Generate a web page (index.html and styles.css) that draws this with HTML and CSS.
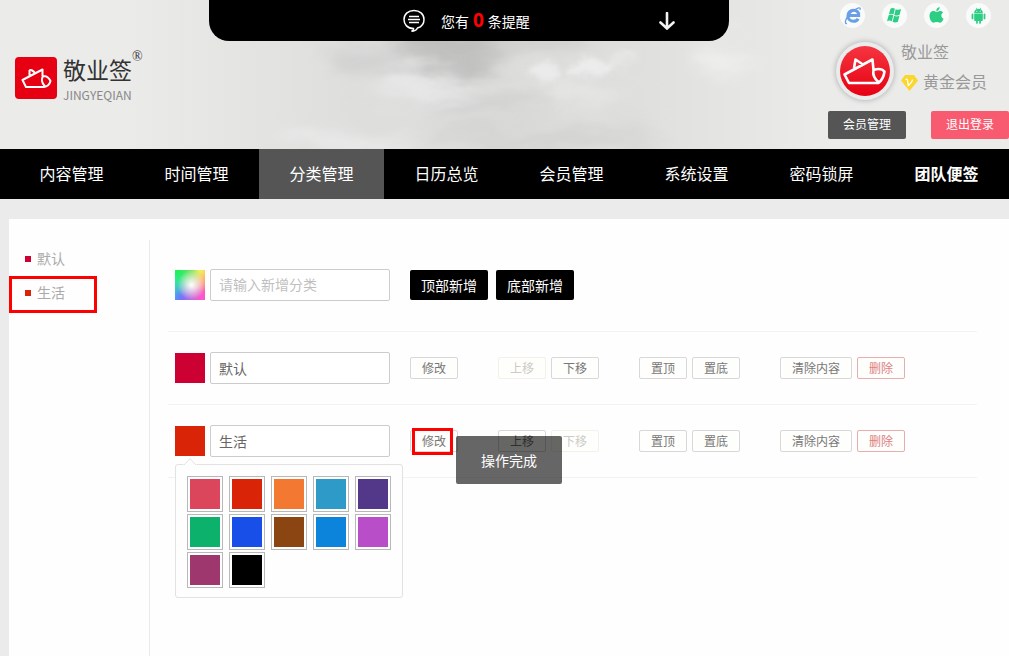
FILE: index.html
```html
<!DOCTYPE html>
<html lang="zh-CN">
<head>
<meta charset="utf-8">
<title>敬业签 - 分类管理</title>
<link rel="stylesheet" href="styles.css">
</head>
<body>
<header class="header">
  <svg class="clouds" viewBox="0 0 1009 149" preserveAspectRatio="none" aria-hidden="true">
    <defs>
      <filter id="soft" x="-50%" y="-50%" width="200%" height="200%">
        <feGaussianBlur stdDeviation="10" result="b"/>
        <feTurbulence type="fractalNoise" baseFrequency="0.012 0.030" numOctaves="4" seed="7"/>
        <feDisplacementMap in="b" scale="50" xChannelSelector="R" yChannelSelector="G"/>
      </filter>
      <filter id="puff" x="-50%" y="-50%" width="200%" height="200%">
        <feGaussianBlur stdDeviation="4" result="b"/>
        <feTurbulence type="fractalNoise" baseFrequency="0.050" numOctaves="4" seed="3"/>
        <feDisplacementMap in="b" scale="18" xChannelSelector="R" yChannelSelector="G"/>
      </filter>
      <linearGradient id="sky"><stop offset="0.120" stop-color="#ebebea"/><stop offset="0.350" stop-color="#dededd"/><stop offset="0.600" stop-color="#dddddc"/><stop offset="0.820" stop-color="#ebebea"/></linearGradient>
    </defs>
    <rect width="1009" height="149" fill="url(#sky)"/>
    <g filter="url(#soft)">
      <ellipse cx="455" cy="46" rx="60" ry="20" fill="#bebebd"/>
      <ellipse cx="530" cy="44" rx="50" ry="8" fill="#cacac9"/>
      <ellipse cx="365" cy="60" rx="35" ry="16" fill="#d2d2d1"/>
      <ellipse cx="490" cy="104" rx="60" ry="9" fill="#cececd"/>
      <ellipse cx="540" cy="140" rx="120" ry="9" fill="#d0d0cf"/>
      <ellipse cx="425" cy="86" rx="45" ry="10" fill="#ebebeb"/>
      <ellipse cx="350" cy="144" rx="70" ry="7" fill="#f0f0f0"/>
      <ellipse cx="725" cy="60" rx="25" ry="18" fill="#eeeeed"/>
      <ellipse cx="590" cy="88" rx="45" ry="12" fill="#e6e6e5"/>
    </g>
    <g filter="url(#puff)" fill="#f1f1f1">
      <ellipse cx="545" cy="72" rx="14" ry="7" opacity="0.800"/>
      <ellipse cx="593" cy="68" rx="24" ry="7" opacity="0.800"/>
      <ellipse cx="621" cy="58" rx="16" ry="5" opacity="0.500"/>
      <ellipse cx="560" cy="97" rx="12" ry="3" opacity="0.400"/>
    </g>
  </svg>
  <a class="logo" href="#" aria-label="敬业签">
    <svg class="logo-mark" viewBox="0 0 42 42"><rect width="42" height="42" rx="4" fill="#e60012"/><path d="M7.500 23 L27.500 12.500 L27.500 19 Q33 18.500 35.500 24 Q34 29.500 29 30 L11 30 Z M14.500 19 L14.500 13.500 Q16 11.500 20.500 16.500 M30 29.500 Q25 24 28 19" fill="none" stroke="#fff" stroke-width="2" stroke-linejoin="round"/></svg>
    <span class="logo-text"><span class="logo-cn">敬业签</span><span class="logo-en">JINGYEQIAN</span></span>
    <span class="logo-reg">®</span>
  </a>
  <div class="notice">
    <svg class="bubble" viewBox="0 0 22 24" fill="none" stroke="#fff" stroke-width="1.500"><path d="M10.500 19.500 C4.500 19.500 1 15.500 1 10.500 C1 5 5.500 1.500 11 1.500 C16.500 1.500 21 5 21 10.500 C21 15 18 18 14.500 19 C13.500 21 11.500 22.300 8.500 22.300 C10.500 21.500 10.800 20.500 10.500 19.500 Z"/><path d="M6 7.500h10M5 10.500h12M6 13.500h10"/></svg>
    <p class="notice-text">您有 <strong>0</strong> 条提醒</p>
    <button class="notice-toggle" aria-label="展开"><svg viewBox="0 0 16 18" fill="none" stroke="#f2f2f2" stroke-width="2.600" stroke-linecap="round"><path d="M8 1v15M1.500 10.500L8 16.500L14.500 10.500"/></svg></button>
  </div>
  <div class="user">
    <div class="platforms">
      <a href="#" aria-label="IE"><svg viewBox="0 0 25 25"><path d="M8.500 12.500h10.200c0-3.200-2-5.200-5.200-5.200c-3.300 0-5.500 2.300-5.500 5.500c0 3.300 2.300 5.500 5.500 5.500c2.200 0 3.800-.9 4.700-2.600" fill="none" stroke="#6a9fe6" stroke-width="3"/><path d="M7 20.500c-3.500.8-1-6.500 4-11s10.500-6.500 9-2.500" fill="none" stroke="#6a9fe6" stroke-width="1.300"/></svg></a>
      <a href="#" aria-label="Windows"><svg viewBox="0 0 25 25" fill="#2cce84"><path d="M8.500 5.700q2.100-1.300 4.400 0l-1.400 5.600q-2.400-1.200-4.600 0zM13.700 6.200q2.600 1.300 5.400-.2l-1.500 5.700q-2.500 1.400-5.300.2zM6.700 12.200q2.200-1.200 4.600 0l-1.500 6q-2.400-1.200-4.800.1zM12.100 12.800q2.700 1.200 5.300-.1l-1.500 6q-2.600 1.300-5.300.1z"/></svg></a>
      <a href="#" aria-label="Apple"><svg viewBox="0 0 25 25" fill="#2cce84"><path d="M12.500 8.800c1.500 0 2.300-.8 3.800-.8c1.200 0 2.200.6 2.800 1.500c-2.600 1.600-2.200 5 .5 6.200c-.8 2-2.200 4-3.700 4c-1.200 0-1.700-.7-3.200-.7s-2 .7-3.200.7c-2 0-4-3.500-4-6.900c0-3 1.800-4.800 3.900-4.800c1.300 0 2.200.8 3.100.8zM12.300 8c0-2.200 1.400-3.700 3.300-4c.2 2.200-1.400 4-3.300 4z"/></svg></a>
      <a href="#" aria-label="Android"><svg viewBox="0 0 25 25" fill="#2cce84"><path d="M8.200 10c0-2 1-3.200 2.400-3.800L9.900 5l.5-.3.800 1.300q1.300-.3 2.600 0l.8-1.300.5.3-.7 1.200c1.400.6 2.400 1.800 2.400 3.800zM8.200 10.600h8.600v6.500q0 .9-.9.900h-1v2.200q-.9 1-1.700 0V18h-1.400v2.200q-.9 1-1.700 0V18h-1q-.9 0-.9-.9zM5.600 11.200q.9-1.200 1.800 0v4.500q-.9 1-1.800 0zM17.600 11.200q.9-1.200 1.800 0v4.500q-.9 1-1.800 0z"/><circle cx="10.800" cy="8.200" r=".5" fill="#fff"/><circle cx="14.200" cy="8.200" r=".5" fill="#fff"/></svg></a>
    </div>
    <div class="profile">
      <svg class="avatar" viewBox="0 0 58 58"><defs><linearGradient id="red" x2="0" y2="1"><stop stop-color="#f53540"/><stop offset="1" stop-color="#e60012"/></linearGradient></defs><circle cx="29" cy="29" r="25" fill="url(#red)"/><path d="M8.500 32.500 L36.500 17.500 L37.500 28 Q45 25.500 48.500 29.500 Q47.500 37 42.500 41 L13 41 Z M18 26 L19.500 17.500 L27 22.500 M43 40.500 Q36 35 37.500 28" fill="none" stroke="#fff" stroke-width="2.600" stroke-linejoin="round"/></svg>
      <div class="profile-info">
        <span>敬业签</span>
        <span class="level"><svg viewBox="0 0 17 16"><path d="M4 0h9l4 5.500L8.500 16L0 5.500Z" fill="#fbd72b"/><path d="M4.500 4.500q2-1 2 1l.8 5q4-3.500 4.200-6" fill="none" stroke="#fff" stroke-width="1.300"/></svg>黄金会员</span>
      </div>
    </div>
    <div class="account"><button class="acct">会员管理</button><button class="acct acct-exit">退出登录</button></div>
  </div>
</header>
<nav class="nav">
  <a href="#">内容管理</a><a href="#">时间管理</a><a href="#" class="active">分类管理</a><a href="#">日历总览</a><a href="#">会员管理</a><a href="#">系统设置</a><a href="#">密码锁屏</a><a href="#" class="team">团队便签</a>
</nav>
<div class="panel">
  <aside class="sidebar">
    <a href="#" class="cat"><i class="dot crimson"></i>默认</a>
    <a href="#" class="cat marked"><i class="dot red"></i>生活</a>
  </aside>
  <main class="content">
    <div class="row row-new">
      <button class="swatch rainbow" aria-label="选择颜色"></button>
      <input class="field" type="text" placeholder="请输入新增分类" aria-label="新增分类">
      <div class="adds"><button class="add">顶部新增</button><button class="add">底部新增</button></div>
    </div>
    <div class="row">
      <button class="swatch crimson" aria-label="颜色"></button>
      <input class="field" type="text" value="默认" aria-label="分类名称">
      <div class="ops">
        <div class="group"><button class="op">修改</button></div>
        <div class="group"><button class="op" disabled>上移</button><button class="op">下移</button></div>
        <div class="group"><button class="op">置顶</button><button class="op">置底</button></div>
        <div class="group"><button class="op wide">清除内容</button><button class="op danger">删除</button></div>
      </div>
    </div>
    <div class="row">
      <button class="swatch red" aria-label="颜色"></button>
      <input class="field" type="text" value="生活" aria-label="分类名称">
      <div class="ops">
        <div class="group"><span class="edit-mark"><button class="op">修改</button></span></div>
        <div class="group"><button class="op">上移</button><button class="op" disabled>下移</button></div>
        <div class="group"><button class="op">置顶</button><button class="op">置底</button></div>
        <div class="group"><button class="op wide">清除内容</button><button class="op danger">删除</button></div>
      </div>
      <div class="palette">
        <svg class="tip" viewBox="0 0 14 8"><path d="M0 7L7 .7L14 7V8H0Z" fill="#fefefe"/><path d="M1 7L7 .7L13 7" fill="none" stroke="#e2e2e2"/></svg>
        <button class="color c1" aria-label="玫红"></button><button class="color c2" aria-label="红"></button><button class="color c3" aria-label="橙"></button><button class="color c4" aria-label="青"></button><button class="color c5" aria-label="紫"></button>
        <button class="color c6" aria-label="绿"></button><button class="color c7" aria-label="蓝"></button><button class="color c8" aria-label="棕"></button><button class="color c9" aria-label="天蓝"></button><button class="color c10" aria-label="浅紫"></button>
        <button class="color c11" aria-label="紫红"></button><button class="color c12" aria-label="黑"></button>
      </div>
      <div class="toast" role="status">操作完成</div>
    </div>
  </main>
</div>
</body>
</html>
```
FILE: styles.css
```css
* { box-sizing: border-box; }
body {
  margin: 0;
  min-height: 100vh;
  display: flex;
  flex-direction: column;
  background: #ebebeb;
  font: 14px/20px "Liberation Sans", "Noto Sans CJK SC", sans-serif;
  color: #666;
}
a { color: inherit; text-decoration: none; }
button, input { font: inherit; color: inherit; margin: 0; padding: 0; }
button { border: 0; cursor: pointer; white-space: nowrap; }
svg { display: block; }

.header { position: relative; display: flex; align-items: flex-start; min-height: 149px; overflow: hidden; }
.header > * { position: relative; }
.header > .clouds { position: absolute; inset: 0; width: 100%; height: 100%; }
.logo { display: flex; width: 209px; padding: 48px 0 0 15px; }
.logo-mark { flex: none; width: 42px; height: 42px; margin-top: 9px; }
.logo-text { display: flex; flex-direction: column; padding: 4px 0 0 6px; font-family: "Noto Sans CJK SC", sans-serif; }
.logo-cn { font-size: 23px; line-height: 34px; color: #333; }
.logo-en { font-size: 12px; line-height: 18px; color: #888; }
.logo-reg { font: 14px/18px "Liberation Serif", serif; color: #333; }
.notice {
  display: flex;
  align-items: center;
  flex: 0 1 520px;
  height: 41px;
  padding: 0 54px 0 194px;
  border-radius: 0 0 20px 20px;
  background: #000;
  color: #fff;
}
.bubble { width: 22px; height: 24px; margin-right: 16px; }
.notice-text { margin: 0; white-space: nowrap; }
.notice-text strong { color: #f00; font: bold 19px/20px "Open Sans", sans-serif; }
.notice-toggle { margin-left: auto; background: none; }
.notice-toggle svg { width: 16px; height: 18px; }
.user { flex: none; width: 181px; margin-left: auto; padding-top: 3px; }
.platforms { display: flex; gap: 17px; padding-left: 12px; }
.platforms a { width: 25px; height: 25px; border-radius: 50%; background: #f9fafa; }
.profile { display: flex; gap: 7px; padding: 14px 0 0 8px; color: #999; font-size: 16px; }
.avatar { flex: none; width: 58px; height: 58px; border-radius: 50%; background: #ebebeb; box-shadow: 0 0 5px 1px #bbb; }
.profile-info { display: flex; flex-direction: column; gap: 10px; padding-top: 1px; }
.level { display: flex; align-items: center; gap: 5px; white-space: nowrap; }
.level svg { width: 17px; height: 16px; }
.account { display: flex; justify-content: space-between; padding-top: 11px; }
.acct { width: 78px; height: 28px; border-radius: 2px; background: #555; color: #fff; font-size: 12px; }
.acct-exit { background: #f85a70; }

.nav { display: flex; background: #000; padding-left: 9px; }
.nav a { flex: 1; padding-top: 2px; line-height: 48px; text-align: center; font-size: 16px; color: #fff; }
.nav .active { background: #555; }
.nav .team { font-weight: bold; }

.panel { flex: 1; display: flex; margin: 20px 0 0 9px; background: #fefefe; }
.sidebar { flex: none; display: flex; flex-direction: column; align-items: flex-start; width: 140px; padding-top: 22px; color: #aaa; }
.cat { display: flex; align-items: center; gap: 6px; width: 88px; height: 35px; padding-left: 16px; }
.dot { width: 6px; height: 6px; }
.marked { height: 37px; padding-bottom: 3px; outline: 3px solid #f00; outline-offset: -3px; }
.crimson { background: #cc0033; }
.red { background: #d92408; }
.content { flex: 1; margin-top: 21px; padding: 0 32px 0 18px; border-left: 1px solid #ebebeb; }
.row { position: relative; display: flex; align-items: center; padding: 20px 0 20px 7px; border-bottom: 1px solid #f2f2f2; }
.row-new { padding-top: 29px; padding-bottom: 30px; }
.swatch { flex: none; width: 30px; height: 30px; margin-right: 5px; }
.rainbow {
  background:
    radial-gradient(circle at 55% 50%, #fff, rgba(255, 255, 255, 0) 65%),
    radial-gradient(circle at 10% 0, #20f050, rgba(32, 240, 80, 0) 60%),
    radial-gradient(circle at 80% 0, #fff860, rgba(255, 248, 96, 0) 55%),
    radial-gradient(circle at 100% 100%, #ff50e0, rgba(255, 80, 224, 0) 65%),
    radial-gradient(circle at 25% 100%, #6070ff, rgba(96, 112, 255, 0) 60%),
    linear-gradient(90deg, #30f0f0, #ff6a50);
}
.field { width: 180px; height: 32px; padding: 0 8px; border: 1px solid #ccc; border-radius: 2px; background: #fff; }
.field::placeholder { color: #bfbfbf; opacity: 1; }
.adds { display: flex; gap: 8px; margin-left: 20px; }
.add { width: 78px; height: 30px; padding-top: 1px; border-radius: 2px; background: #000; color: #fff; }
.ops { display: flex; gap: 40px; margin-left: 20px; }
.group { display: flex; gap: 5px; }
.op { width: 48px; height: 22px; padding-top: 1px; border: 1px solid #d8d8d8; border-radius: 2px; background: #fefefc; color: #777; font-size: 12px; line-height: 20px; }
.wide { width: 72px; }
.op:disabled { border-color: #f2f2ea; color: #ccccc4; cursor: default; }
.danger { border-color: #e8adad; color: #dd8080; }
.edit-mark { position: relative; }
.edit-mark::after { content: ""; position: absolute; inset: -2px 5px -3px 2px; border: 3px solid #f00; pointer-events: none; }
.palette {
  position: absolute;
  top: 59px;
  left: 7px;
  display: grid;
  grid-template-columns: repeat(5, 36px);
  gap: 2px 6px;
  padding: 11px 11px 9px;
  border: 1px solid #e2e2e2;
  border-radius: 3px;
  background: #fefefe;
}
.tip { position: absolute; left: 7px; top: -7px; width: 14px; height: 8px; }
.color { width: 36px; height: 36px; padding: 2px; border: 1px solid #b8b8b8; background-color: #fff; background-clip: content-box; }
.c1 { background-color: #dc465d; }
.c2 { background-color: #d92408; }
.c3 { background-color: #f37831; }
.c4 { background-color: #2d9ac7; }
.c5 { background-color: #533889; }
.c6 { background-color: #0cb26c; }
.c7 { background-color: #174fe8; }
.c8 { background-color: #8b4513; }
.c9 { background-color: #0d84dc; }
.c10 { background-color: #b94fc8; }
.c11 { background-color: #9d376d; }
.c12 { background-color: #000; }
.toast { position: absolute; left: 288px; top: 31px; padding: 15px 25px 13px; border-radius: 2px; background: rgba(0, 0, 0, 0.6); color: #fff; }
```
